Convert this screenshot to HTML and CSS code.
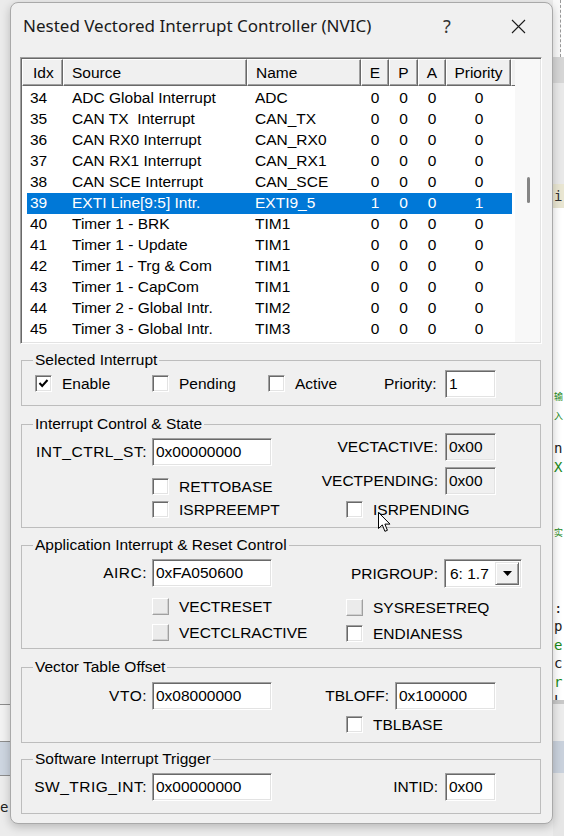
FILE: index.html
```html
<!DOCTYPE html>
<html>
<head>
<meta charset="utf-8">
<link rel="stylesheet" href="styles.css">
</head>
<body>
<div class="left-strip">
  <div class="ls-a"></div>
  <div class="ls-line"></div>
  <div class="ls-b"></div>
  <div class="ls-line"></div>
  <div class="ls-band"></div>
  <div class="ls-line"></div>
  <div class="ls-c">e</div>
</div>

<div class="dialog">
  <div class="titlebar">
    <span class="title">Nested Vectored Interrupt Controller (NVIC)</span>
    <span class="help">?</span>
    <span class="close"><svg width="15" height="15" viewBox="0 0 15 15"><path d="M1 1 L14 14 M14 1 L1 14" stroke="#1b1b1b" stroke-width="1.1" fill="none"/></svg></span>
  </div>

  <div class="listbox">
    <div class="lv">
      <div class="lv-head">
        <div class="hc h-idx">Idx</div>
        <div class="hc h-src">Source</div>
        <div class="hc h-name">Name</div>
        <div class="hc h-e">E</div>
        <div class="hc h-p">P</div>
        <div class="hc h-a">A</div>
        <div class="hc h-pri">Priority</div>
        <div class="hc h-fill"></div>
      </div>
      <div class="lv-rows">
        <div class="lrow"><span class="c-idx">34</span><span class="c-src">ADC Global Interrupt</span><span class="c-name">ADC</span><span class="c-e">0</span><span class="c-p">0</span><span class="c-a">0</span><span class="c-pri">0</span></div>
        <div class="lrow"><span class="c-idx">35</span><span class="c-src">CAN TX  Interrupt</span><span class="c-name">CAN_TX</span><span class="c-e">0</span><span class="c-p">0</span><span class="c-a">0</span><span class="c-pri">0</span></div>
        <div class="lrow"><span class="c-idx">36</span><span class="c-src">CAN RX0 Interrupt</span><span class="c-name">CAN_RX0</span><span class="c-e">0</span><span class="c-p">0</span><span class="c-a">0</span><span class="c-pri">0</span></div>
        <div class="lrow"><span class="c-idx">37</span><span class="c-src">CAN RX1 Interrupt</span><span class="c-name">CAN_RX1</span><span class="c-e">0</span><span class="c-p">0</span><span class="c-a">0</span><span class="c-pri">0</span></div>
        <div class="lrow"><span class="c-idx">38</span><span class="c-src">CAN SCE Interrupt</span><span class="c-name">CAN_SCE</span><span class="c-e">0</span><span class="c-p">0</span><span class="c-a">0</span><span class="c-pri">0</span></div>
        <div class="lrow sel"><span class="c-idx">39</span><span class="c-src">EXTI Line[9:5] Intr.</span><span class="c-name">EXTI9_5</span><span class="c-e">1</span><span class="c-p">0</span><span class="c-a">0</span><span class="c-pri">1</span></div>
        <div class="lrow"><span class="c-idx">40</span><span class="c-src">Timer 1 - BRK</span><span class="c-name">TIM1</span><span class="c-e">0</span><span class="c-p">0</span><span class="c-a">0</span><span class="c-pri">0</span></div>
        <div class="lrow"><span class="c-idx">41</span><span class="c-src">Timer 1 - Update</span><span class="c-name">TIM1</span><span class="c-e">0</span><span class="c-p">0</span><span class="c-a">0</span><span class="c-pri">0</span></div>
        <div class="lrow"><span class="c-idx">42</span><span class="c-src">Timer 1 - Trg &amp; Com</span><span class="c-name">TIM1</span><span class="c-e">0</span><span class="c-p">0</span><span class="c-a">0</span><span class="c-pri">0</span></div>
        <div class="lrow"><span class="c-idx">43</span><span class="c-src">Timer 1 - CapCom</span><span class="c-name">TIM1</span><span class="c-e">0</span><span class="c-p">0</span><span class="c-a">0</span><span class="c-pri">0</span></div>
        <div class="lrow"><span class="c-idx">44</span><span class="c-src">Timer 2 - Global Intr.</span><span class="c-name">TIM2</span><span class="c-e">0</span><span class="c-p">0</span><span class="c-a">0</span><span class="c-pri">0</span></div>
        <div class="lrow"><span class="c-idx">45</span><span class="c-src">Timer 3 - Global Intr.</span><span class="c-name">TIM3</span><span class="c-e">0</span><span class="c-p">0</span><span class="c-a">0</span><span class="c-pri">0</span></div>
      </div>
    </div>
    <div class="vscroll"><div class="thumb"></div></div>
  </div>

  <fieldset class="grp g-sel">
    <legend>Selected Interrupt</legend>
    <div class="row-sel">
      <span class="cb w117"><span class="box"><svg width="11" height="11" viewBox="0 0 11 11"><path d="M1.5 5 L4.2 8 L9.5 2" stroke="#000" stroke-width="2" fill="none"/></svg></span>Enable</span>
      <span class="cb w116"><span class="box"></span>Pending</span>
      <span class="cb w116"><span class="box"></span>Active</span>
      <span class="lbl-pri">Priority:</span>
      <input class="field f-small" value="1">
    </div>
  </fieldset>

  <fieldset class="grp g-ics">
    <legend>Interrupt Control &amp; State</legend>
    <div class="cols">
      <div class="col-l">
        <div class="frow mt5"><span class="flabel">INT_CTRL_ST:</span><input class="field f-wide" value="0x00000000"></div>
        <div class="cb ind mt12"><span class="box"></span>RETTOBASE</div>
        <div class="cb ind mt6"><span class="box"></span>ISRPREEMPT</div>
      </div>
      <div class="col-r">
        <div class="frow"><span class="rlabel">VECTACTIVE:</span><input class="field f-small ro" value="0x00" readonly></div>
        <div class="frow mt6"><span class="rlabel">VECTPENDING:</span><input class="field f-small ro" value="0x00" readonly></div>
        <div class="cb rind mt6"><span class="box"></span>ISRPENDING</div>
      </div>
    </div>
  </fieldset>

  <fieldset class="grp g-airc">
    <legend>Application Interrupt &amp; Reset Control</legend>
    <div class="cols">
      <div class="col-l">
        <div class="frow mt5"><span class="flabel">AIRC:</span><input class="field f-wide" value="0xFA050600"></div>
        <div class="cb ind mt11"><span class="box dis"></span>VECTRESET</div>
        <div class="cb ind mt9"><span class="box dis"></span>VECTCLRACTIVE</div>
      </div>
      <div class="col-r">
        <div class="frow mt5"><span class="rlabel pg">PRIGROUP:</span>
          <div class="combo"><span class="combo-text">6: 1.7</span><span class="combo-btn"><svg width="9" height="5" viewBox="0 0 9 5"><path d="M0 0 H9 L4.5 5 Z" fill="#000"/></svg></span></div>
        </div>
        <div class="cb rind mt11"><span class="box dis"></span>SYSRESETREQ</div>
        <div class="cb rind mt9"><span class="box"></span>ENDIANESS</div>
      </div>
    </div>
  </fieldset>

  <fieldset class="grp g-vto">
    <legend>Vector Table Offset</legend>
    <div class="cols">
      <div class="col-l">
        <div class="frow mt6"><span class="flabel">VTO:</span><input class="field f-wide" value="0x08000000"></div>
      </div>
      <div class="col-r">
        <div class="frow mt6"><span class="rlabel tb">TBLOFF:</span><input class="field f-mid" value="0x100000"></div>
        <div class="cb rind mt6"><span class="box"></span>TBLBASE</div>
      </div>
    </div>
  </fieldset>

  <fieldset class="grp g-sw">
    <legend>Software Interrupt Trigger</legend>
    <div class="cols">
      <div class="col-l">
        <div class="frow mt5"><span class="flabel">SW_TRIG_INT:</span><input class="field f-wide" value="0x00000000"></div>
      </div>
      <div class="col-r">
        <div class="frow mt5"><span class="rlabel">INTID:</span><input class="field f-small" value="0x00"></div>
      </div>
    </div>
  </fieldset>
</div>

<div class="right-strip">
  <div class="rs-top"></div>
  <div class="rs-grey"></div>
  <div class="rs-light"></div>
  <div class="rs-chip">i</div>
  <div class="rs-code">
    <div class="gap180"></div>
    <div class="g cjk">输</div>
    <div class="g cjk">入</div>
    <div class="gap14"></div>
    <div class="k">n</div>
    <div class="g">X</div>
    <div class="gap48"></div>
    <div class="g cjk">实</div>
    <div class="gap56"></div>
    <div class="k">:</div>
    <div class="k">p</div>
    <div class="g">e</div>
    <div class="k">c</div>
    <div class="g">r</div>
    <div class="k">L</div>
  </div>
  <div class="rs-line"></div>
  <div class="rs-mid"></div>
  <div class="rs-band"></div>
  <div class="rs-bottom"></div>
</div>

<svg class="cursor" width="13" height="21" viewBox="0 0 13 21"><path d="M0.5 0.5 L0.5 16.5 L4.3 12.9 L6.9 19.3 L9.4 18.3 L6.9 12.1 L12 12.1 Z" fill="#fff" stroke="#000" stroke-width="1" stroke-linejoin="miter"/></svg>
</body>
</html>
```

FILE: styles.css
```css
html, body {
  margin: 0;
  padding: 0;
}
body {
  width: 564px;
  height: 836px;
  overflow: hidden;
  position: relative;
  background: #ececec;
  display: grid;
  grid-template-columns: 10px 543px 11px;
  font-family: "Liberation Sans", Arial, sans-serif;
  font-size: 15.5px;
  color: #000;
}

/* background strips */
.left-strip {
  display: flex;
  flex-direction: column;
  background: #ececec;
}
.ls-a { height: 704px; background: #ebebeb; }
.ls-line { height: 1px; background: #8d8d8d; }
.ls-b { height: 36px; background: #f2f2f2; }
.ls-band { height: 33px; background: #cdd5e0; }
.ls-c {
  font-family: "DejaVu Sans Mono", monospace;
  font-size: 14px;
  line-height: 18px;
  padding-top: 22px;
  color: #222;
}

.right-strip {
  display: flex;
  flex-direction: column;
  background: #fff;
  overflow: hidden;
  font-family: "DejaVu Sans Mono", monospace;
  font-size: 14px;
}
.rs-top { height: 57px; background: #f8f8f8; border-right: 1px dashed #9a9a9a; width: 7px; flex: none; }
.rs-grey { height: 26px; background: #d6d6d6; }
.rs-light { height: 101px; background: #e9e9e9; }
.rs-chip { height: 24px; line-height: 24px; background: #e9e6d2; color: #333; padding-left: 1px; }
.rs-code { height: 492px; background: #fff; line-height: 18.5px; padding-left: 1px; }
.rs-code .g { color: #1a8a1a; }
.rs-code .k { color: #222; }
.rs-code .cjk { font-family: "Noto Sans CJK SC", sans-serif; font-size: 9px; }
.gap180 { height: 180px; }
.gap14 { height: 14px; }
.gap48 { height: 48px; }
.gap56 { height: 56px; }
.rs-line { height: 4px; background: #c8c8c8; }
.rs-mid { height: 37px; background: #ececec; }
.rs-band { height: 32px; background: #c9d1dc; }
.rs-bottom { flex: 1; background: #e6e6e6; }

/* dialog */
.dialog {
  margin-top: 2px;
  height: 822px;
  box-sizing: border-box;
  border: 1px solid #a9a9a9;
  border-radius: 8px;
  background: #f0f0f0;
  box-shadow: 0 3px 10px rgba(0, 0, 0, 0.22);
  display: flex;
  flex-direction: column;
  padding: 0 10px 0 9px;
  position: relative;
  z-index: 1;
}

.titlebar {
  height: 54px;
  flex: none;
  display: flex;
  align-items: flex-start;
  padding-top: 11px;
  box-sizing: border-box;
}
.title {
  font-family: "Noto Sans", "Open Sans", sans-serif;
  font-size: 17px;
  line-height: 24px;
  padding-left: 3px;
  flex: 1;
  color: #1a1a1a;
  white-space: nowrap;
}
.help {
  font-family: "Noto Sans", sans-serif;
  font-size: 18px;
  line-height: 24px;
  width: 46px;
  text-align: center;
  color: #333;
  margin-right: 25px;
}
.close {
  width: 46px;
  height: 24px;
  display: flex;
  align-items: center;
  justify-content: center;
  margin-right: 1px;
}

/* list view */
.listbox {
  height: 287px;
  flex: none;
  box-sizing: border-box;
  border: 1px solid;
  border-color: #a0a0a0 #ffffff #ffffff #a0a0a0;
  box-shadow: inset 1px 1px 0 #696969, inset -1px -1px 0 #e3e3e3;
  padding: 1px;
  background: #fff;
  display: flex;
}
.lv {
  width: 493px;
  flex: none;
  display: flex;
  flex-direction: column;
  background: #fff;
}
.lv-head {
  display: flex;
  height: 27px;
  flex: none;
}
.hc {
  box-sizing: border-box;
  height: 27px;
  line-height: 25px;
  background: #f0f0f0;
  border: 1px solid;
  border-color: #ffffff #696969 #696969 #ffffff;
  box-shadow: inset -1px -1px 0 #a0a0a0;
  text-align: center;
  white-space: nowrap;
  overflow: hidden;
}
.h-idx { width: 41px; text-align: left; padding-left: 10px; }
.h-src { width: 184px; text-align: left; padding-left: 8px; }
.h-name { width: 114px; text-align: left; padding-left: 8px; }
.h-e { width: 28px; }
.h-p { width: 29px; }
.h-a { width: 28px; }
.h-pri { width: 65px; }
.h-fill { width: 4px; border-right: 0; box-shadow: none; }

.lv-rows {
  padding-top: 2px;
  display: flex;
  flex-direction: column;
}
.lrow {
  display: flex;
  height: 21px;
  line-height: 19px;
  margin-left: 5px;
  width: 485px;
  white-space: pre;
}
.lrow.sel {
  background: #0078d7;
  color: #fff;
}
.lrow span { display: block; overflow: hidden; }
.c-idx { width: 36px; padding-left: 3px; box-sizing: border-box; }
.c-src { width: 184px; padding-left: 9px; box-sizing: border-box; }
.c-name { width: 114px; padding-left: 8px; box-sizing: border-box; }
.c-e { width: 28px; text-align: center; }
.c-p { width: 29px; text-align: center; }
.c-a { width: 28px; text-align: center; }
.c-pri { width: 66px; text-align: center; }

.vscroll {
  flex: 1;
  background: #f8f8f8;
  padding-top: 118px;
  padding-left: 12px;
  box-sizing: border-box;
}
.thumb {
  width: 3px;
  height: 26px;
  border-radius: 2px;
  background: #858585;
}

/* group boxes */
.grp {
  margin: 0 1px;
  padding: 0;
  border: 1px solid #bdbdbd;
  box-sizing: border-box;
  min-width: 0;
  flex: none;
}
.grp legend {
  line-height: 18px;
  padding: 0 2px;
  margin-left: 11px;
}
.g-sel { height: 55px; margin-top: 7px; }
.g-ics { height: 113px; margin-top: 9px; }
.g-airc { height: 113px; margin-top: 8px; }
.g-vto { height: 85px; margin-top: 9px; }
.g-sw { height: 64px; margin-top: 7px; }

.row-sel {
  display: flex;
  align-items: center;
  height: 27px;
  margin: 1px 0 0 13px;
}
.w117 { width: 117px; }
.w116 { width: 116px; }
.lbl-pri { width: 61px; }

.cols { display: flex; }
.col-l { width: 278px; display: flex; flex-direction: column; align-items: flex-start; }
.col-r { flex: 1; display: flex; flex-direction: column; align-items: flex-start; }

.frow { display: flex; align-items: center; }
.flabel {
  width: 130px;
  box-sizing: border-box;
  text-align: right;
  padding-right: 5px;
  white-space: nowrap;
  letter-spacing: 0.5px;
}
.rlabel {
  width: 145px;
  box-sizing: border-box;
  text-align: right;
  padding-right: 7px;
  white-space: nowrap;
}
.rlabel.pg { width: 144px; padding-right: 6px; }
.rlabel.tb { width: 95px; padding-right: 6px; }

.mt5 { margin-top: 5px; }
.mt6 { margin-top: 6px; }
.mt9 { margin-top: 9px; }
.mt11 { margin-top: 11px; }
.mt12 { margin-top: 12px; }
.ind { margin-left: 130px; }
.rind { margin-left: 46px; }

.cb {
  display: flex;
  align-items: center;
  gap: 10px;
  line-height: 17px;
  white-space: nowrap;
}
.box {
  width: 17px;
  height: 17px;
  flex: none;
  box-sizing: border-box;
  background: #fff;
  border: 1px solid;
  border-color: #a0a0a0 #ffffff #ffffff #a0a0a0;
  box-shadow: inset 1px 1px 0 #696969, inset -1px -1px 0 #e3e3e3;
  display: flex;
  align-items: center;
  justify-content: center;
}
.box.dis {
  background: #ebebeb;
  border-color: #ffffff #a0a0a0 #a0a0a0 #ffffff;
  box-shadow: inset -1px -1px 0 #d0d0d0;
}

.field {
  box-sizing: border-box;
  height: 28px;
  margin: 0;
  background: #fff;
  border: 1px solid;
  border-color: #a0a0a0 #ffffff #ffffff #a0a0a0;
  box-shadow: inset 1px 1px 0 #696969, inset -1px -1px 0 #e3e3e3;
  padding: 0 2px 0 3px;
  font: inherit;
  color: #000;
  outline: none;
}
.field.ro { background: #f0f0f0; }
.f-wide { width: 120px; }
.f-small { width: 51px; }
.f-mid { width: 101px; }

.combo {
  box-sizing: border-box;
  width: 78px;
  height: 29px;
  background: #fff;
  border: 1px solid;
  border-color: #a0a0a0 #ffffff #ffffff #a0a0a0;
  box-shadow: inset 1px 1px 0 #696969, inset -1px -1px 0 #e3e3e3;
  padding: 2px;
  display: flex;
  align-items: stretch;
}
.combo-text {
  flex: 1;
  padding-left: 3px;
  line-height: 23px;
}
.combo-btn {
  width: 24px;
  box-sizing: border-box;
  background: #f0f0f0;
  border: 1px solid;
  border-color: #e3e3e3 #696969 #696969 #e3e3e3;
  box-shadow: inset 1px 1px 0 #fff, inset -1px -1px 0 #a0a0a0;
  display: flex;
  align-items: center;
  justify-content: center;
}

.cursor {
  position: absolute;
  left: 378px;
  top: 512px;
  z-index: 5;
}
```
